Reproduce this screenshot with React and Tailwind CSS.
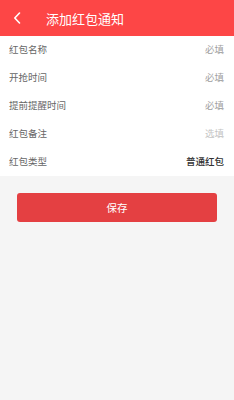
export default function App() {
    const rows = [
        { label: "红包名称", value: "必填", tone: "text-[#a0a0a0]" },
        { label: "开抢时间", value: "必填", tone: "text-[#a0a0a0]" },
        { label: "提前提醒时间", value: "必填", tone: "text-[#a0a0a0]" },
        { label: "红包备注", value: "选填", tone: "text-[#c4c4c4]" },
        { label: "红包类型", value: "普通红包", tone: "text-[#333333] font-medium" },
    ];

    return (
        <div
            className="w-[234px] h-[400px] bg-[#f5f5f5] flex flex-col"
            style={ { fontFamily: '"Noto Sans CJK SC", "Noto Sans", sans-serif' } }
        >
            <div className="h-[36px] bg-[#fd4646] flex items-center shrink-0">
                <div className="w-[46px] flex items-center pl-[13px]">
                    <svg width="8" height="12" viewBox="0 0 8 12" fill="none">
                        <path d="M6.5 1 L1.8 6 L6.5 11" stroke="white" strokeWidth="1.6" strokeLinecap="round" strokeLinejoin="round" />
                    </svg>
                </div>
                <span className="text-white text-[13px] leading-none">添加红包通知</span>
            </div>

            <div className="bg-white">
                { rows.map((row) => (
                    <div key={ row.label } className="h-[28px] flex items-center justify-between pl-[9px] pr-[10px]">
                        <span className="text-[9.5px] text-[#666666] leading-none">{ row.label }</span>
                        <span className={ `text-[9.5px] leading-none ${row.tone}` }>{ row.value }</span>
                    </div>
                )) }
            </div>

            <div className="px-[17px] pt-[17px]">
                <button className="w-[200px] h-[29px] bg-[#e44042] rounded-[3px] text-white text-[10.5px] flex items-center justify-center">
                    保存
                </button>
            </div>
        </div>
    );
}
